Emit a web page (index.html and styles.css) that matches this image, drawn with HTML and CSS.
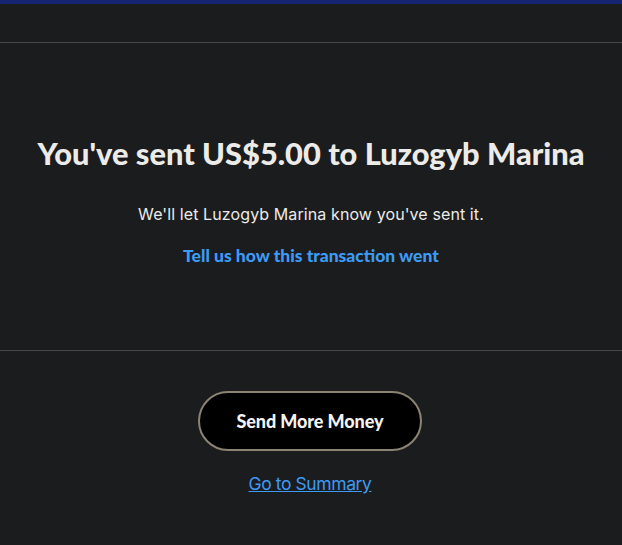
FILE: index.html
```html
<!DOCTYPE html>
<html>
<head>
<meta charset="utf-8">
<link rel="stylesheet" href="styles.css">
</head>
<body>
<div class="topbar"></div>
<div class="header"></div>
<section class="message">
  <h1 class="title">You've sent US$5.00 to Luzogyb Marina</h1>
  <p class="sub">We'll let Luzogyb Marina know you've sent it.</p>
  <a class="feedback" href="#">Tell us how this transaction went</a>
</section>
<section class="actions">
  <button class="btn">Send More Money</button>
  <a class="summary" href="#">Go to Summary</a>
</section>
</body>
</html>
```
FILE: styles.css
```css
html, body {
  margin: 0;
  padding: 0;
  background: #1b1c1e;
  height: 100%;
}
body {
  font-family: Lato, "Noto Sans", sans-serif;
  color: #ecebe8;
}
.topbar {
  height: 4px;
  background: #142471;
}
.header {
  height: 38px;
  border-bottom: 1px solid #47484a;
}
.message {
  height: 308px;
  border-bottom: 1px solid #47484a;
  display: flex;
  flex-direction: column;
  align-items: center;
  padding-top: 92px;
  box-sizing: border-box;
}
.title {
  margin: 0;
  font-size: 30.8px;
  font-weight: 900;
  letter-spacing: 0;
  line-height: 38px;
}
.sub {
  margin: 30px 0 0;
  font-family: Inter, sans-serif;
  font-size: 16px;
  letter-spacing: 0.1px;
  line-height: 22px;
}
.feedback {
  margin-top: 20px;
  color: #3d9bf5;
  font-weight: 900;
  font-size: 17.5px;
  text-decoration: none;
  line-height: 22px;
}
.actions {
  display: flex;
  flex-direction: column;
  align-items: center;
  padding-top: 40px;
  padding-right: 2px;
}
.btn {
  width: 224px;
  height: 60px;
  border-radius: 30px;
  border: 2px solid #8c8373;
  background: #000;
  color: #f4f3f1;
  font-family: Lato, sans-serif;
  font-weight: 900;
  font-size: 18px;
  letter-spacing: -0.1px;
}
.summary {
  margin-top: 22px;
  color: #3d9bf5;
  font-family: Inter, sans-serif;
  font-size: 17.5px;
  letter-spacing: -0.4px;
  line-height: 22px;
}
```
